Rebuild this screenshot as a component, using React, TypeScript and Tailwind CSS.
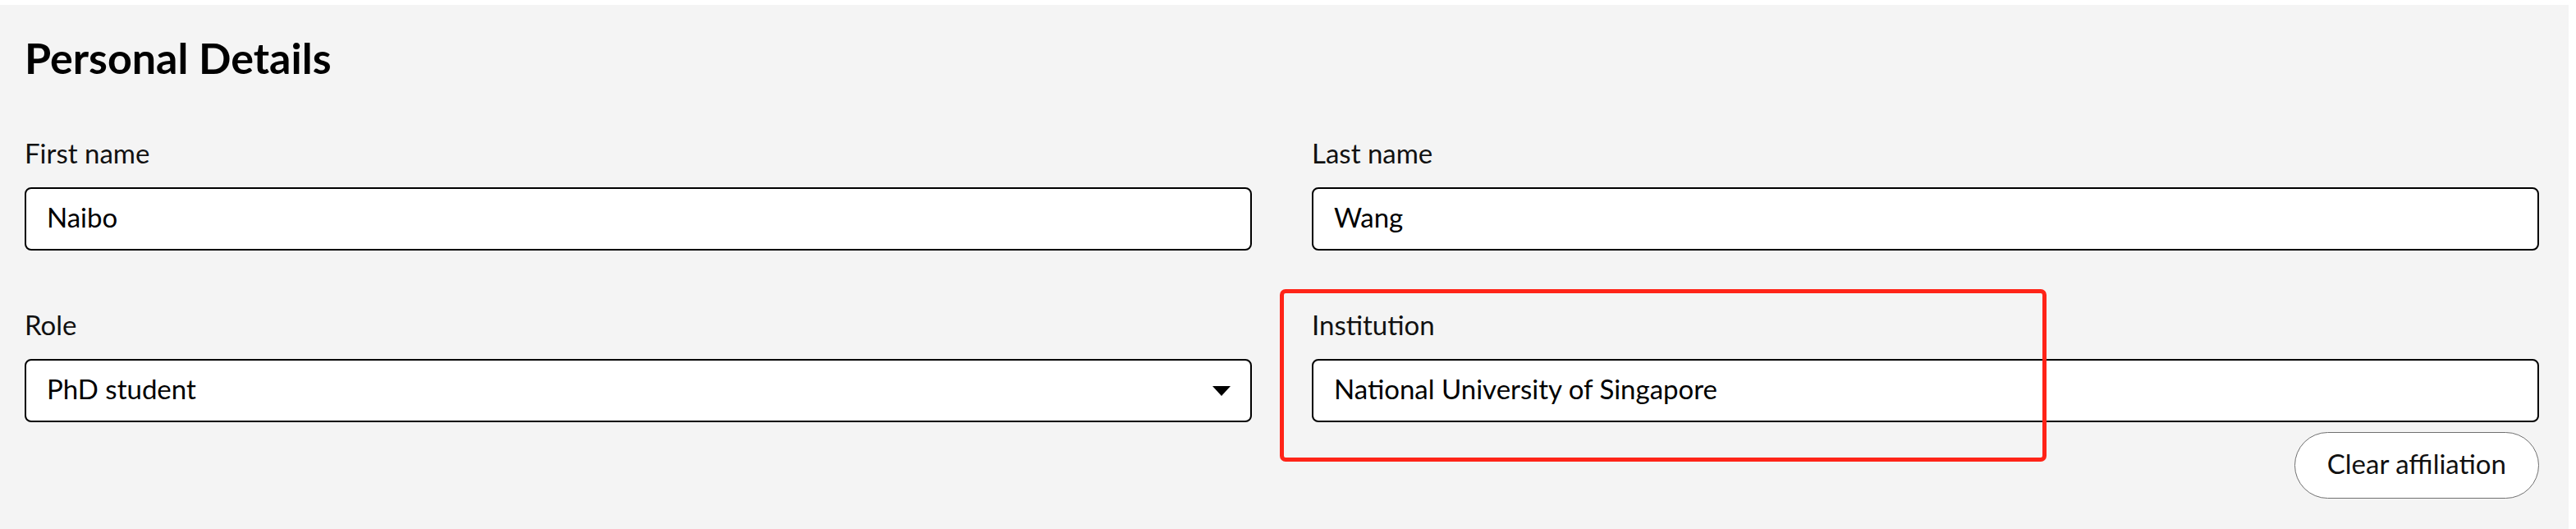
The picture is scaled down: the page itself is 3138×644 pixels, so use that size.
import React from 'react'

const FONT = { fontFamily: 'Lato, "Noto Sans", sans-serif' }

interface FieldProps {
  label: string
  value: string
  select?: boolean
  children?: React.ReactNode
}

function Field({ label, value, select = false, children }: FieldProps) {
  return (
    <div className="relative flex flex-col">
      <label className="text-[33px] leading-[40px] text-[#111]">{label}</label>
      <div className="mt-[22px] h-[77px] rounded-[8px] border-2 border-black bg-white flex items-center pl-[25px] pr-[24px] pb-[5px]">
        <span className="flex-1 text-[33px] leading-[38px] text-black whitespace-nowrap">{value}</span>
        {select && (
          <svg width="22" height="12" viewBox="0 0 22 12" className="shrink-0 mt-[6px]">
            <polygon points="0,0 22,0 11,12" fill="#000" />
          </svg>
        )}
      </div>
      {children}
    </div>
  )
}

export default function App() {
  return (
    <div className="min-h-[644px] bg-white pt-[6px] pr-[9px]" style={FONT}>
      <div className="bg-[#f4f4f4] min-h-[638px] pl-[30px] pr-[36px] pt-[33px]">
        <h2 className="text-[52px] leading-[62px] font-bold text-black">Personal Details</h2>

        <div className="mt-[65px] grid grid-cols-2 gap-x-[73px]">
          <Field label="First name" value="Naibo" />
          <Field label="Last name" value="Wang" />
        </div>

        <div className="mt-[70px] grid grid-cols-2 gap-x-[73px]">
          <Field label="Role" value="PhD student" select />
          <Field label="Institution" value="National University of Singapore">
            <div className="flex justify-end mt-[12px]">
              <button className="h-[81px] px-[39px] rounded-full border-[1.5px] border-[#707070] bg-white text-[33px] text-[#111] pb-[4px]">
                Clear affiliation
              </button>
            </div>
            {/* annotation overlay */}
            <div className="absolute left-[-39px] top-[-23px] w-[934px] h-[210px] rounded-[7px] border-[5px] border-[#ff2418] pointer-events-none" />
          </Field>
        </div>
      </div>
    </div>
  )
}
